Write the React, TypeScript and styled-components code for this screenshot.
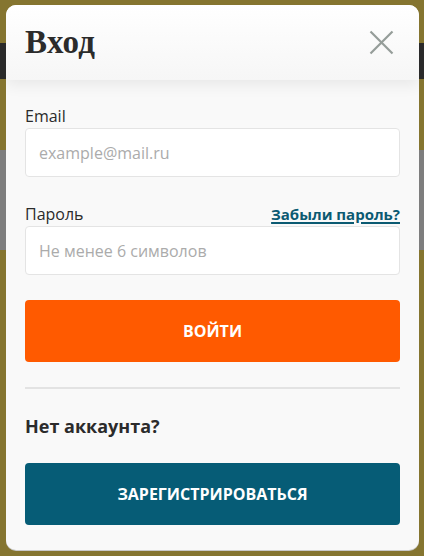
import React from 'react';
import styled, {createGlobalStyle} from 'styled-components';

const GlobalStyle = createGlobalStyle`
    html, body {
        margin: 0;
        padding: 0;
        width: 424px;
        height: 556px;
        overflow: hidden;
    }
    * {
        box-sizing: border-box;
    }
`;

const Overlay = styled.div`
    width: 424px;
    height: 556px;
    padding: 5px 5px 6px 6px;
    font-family: "Open Sans", "Noto Sans", Arial, sans-serif;
    background:
        linear-gradient(to bottom,
            transparent 0, transparent 43px,
            #2a2a2a 43px, #2a2a2a 79px,
            transparent 79px, transparent 150px,
            #7e7e7e 150px, #7e7e7e 250px,
            transparent 250px),
        #857530;
`;

const Modal = styled.div`
    width: 413px;
    height: 545px;
    border-radius: 10px;
    overflow: hidden;
    background: #f9f9f9;
    display: flex;
    flex-direction: column;
    box-shadow: 0 1px 0 #c9c9c9;
`;

const Header = styled.div`
    position: relative;
    z-index: 1;
    height: 75px;
    flex-shrink: 0;
    display: flex;
    align-items: center;
    justify-content: space-between;
    padding: 0 25px 0 19px;
    background: linear-gradient(to bottom, #ffffff 0%, #f6f6f6 100%);
    box-shadow: 0 5px 14px rgba(0, 0, 0, 0.07);
`;

const Title = styled.h2`
    margin: 0;
    font-family: "Liberation Serif", "DejaVu Serif", serif;
    font-size: 33px;
    letter-spacing: 0.3px;
    font-weight: bold;
    color: #2b2b2b;
`;

const CloseButton = styled.button`
    width: 25px;
    height: 25px;
    padding: 0;
    border: none;
    background: none;
    cursor: pointer;
    display: flex;
    align-items: center;
    justify-content: center;
`;

const Body = styled.form`
    padding: 25px 19px 25px 19px;
    display: flex;
    flex-direction: column;
`;

const LabelRow = styled.div<{$spaced?: boolean}>`
    display: flex;
    justify-content: space-between;
    align-items: baseline;
    margin-top: ${p => p.$spaced ? '26px' : '0'};
    margin-bottom: 1px;
`;

const Label = styled.label`
    font-size: 16px;
    line-height: 22px;
    color: #2b2b2b;
`;

const ForgotLink = styled.a`
    font-size: 15px;
    line-height: 22px;
    font-weight: bold;
    color: #0b5a72;
    text-decoration: underline;
    text-decoration-thickness: 2px;
    text-underline-offset: 2px;
    cursor: pointer;
`;

const Input = styled.input`
    width: 100%;
    height: 49px;
    padding: 0 13px;
    border: 1px solid #e4e4e4;
    border-radius: 4px;
    background: #ffffff;
    font-family: inherit;
    font-size: 16px;
    color: #2b2b2b;
    outline: none;

    &::placeholder {
        color: #ababab;
    }
`;

const Button = styled.button<{$color: string}>`
    width: 100%;
    height: 62px;
    border: none;
    border-radius: 4px;
    background: ${p => p.$color};
    color: #ffffff;
    font-family: inherit;
    font-size: 16px;
    font-weight: bold;
    text-transform: uppercase;
    cursor: pointer;
`;

const Divider = styled.hr`
    margin: 25px 0;
    border: none;
    height: 2px;
    background: #e3e3e3;
`;

const NoAccount = styled.div`
    font-size: 18px;
    line-height: 24px;
    font-weight: bold;
    color: #2b2b2b;
    margin-bottom: 25px;
`;

const SubmitWrap = styled.div`
    margin-top: 25px;
`;

const CloseIcon = () => (
    <svg width="25" height="25" viewBox="0 0 25 25">
        <path d="M1.5 1.5 L23.5 23.5 M23.5 1.5 L1.5 23.5" stroke="#959d99" strokeWidth="2.2" fill="none"/>
    </svg>
);

const App: React.FC = () => {
    return (
        <>
            <GlobalStyle/>
            <Overlay>
                <Modal>
                    <Header>
                        <Title>Вход</Title>
                        <CloseButton type="button" aria-label="Закрыть">
                            <CloseIcon/>
                        </CloseButton>
                    </Header>
                    <Body onSubmit={e => e.preventDefault()}>
                        <LabelRow>
                            <Label htmlFor="email">Email</Label>
                        </LabelRow>
                        <Input id="email" type="email" placeholder="example@mail.ru"/>
                        <LabelRow $spaced>
                            <Label htmlFor="password">Пароль</Label>
                            <ForgotLink>Забыли пароль?</ForgotLink>
                        </LabelRow>
                        <Input id="password" type="password" placeholder="Не менее 6 символов"/>
                        <SubmitWrap>
                            <Button type="submit" $color="#ff5a00">Войти</Button>
                        </SubmitWrap>
                        <Divider/>
                        <NoAccount>Нет аккаунта?</NoAccount>
                        <Button type="button" $color="#065c76">Зарегистрироваться</Button>
                    </Body>
                </Modal>
            </Overlay>
        </>
    );
}

export default App;
